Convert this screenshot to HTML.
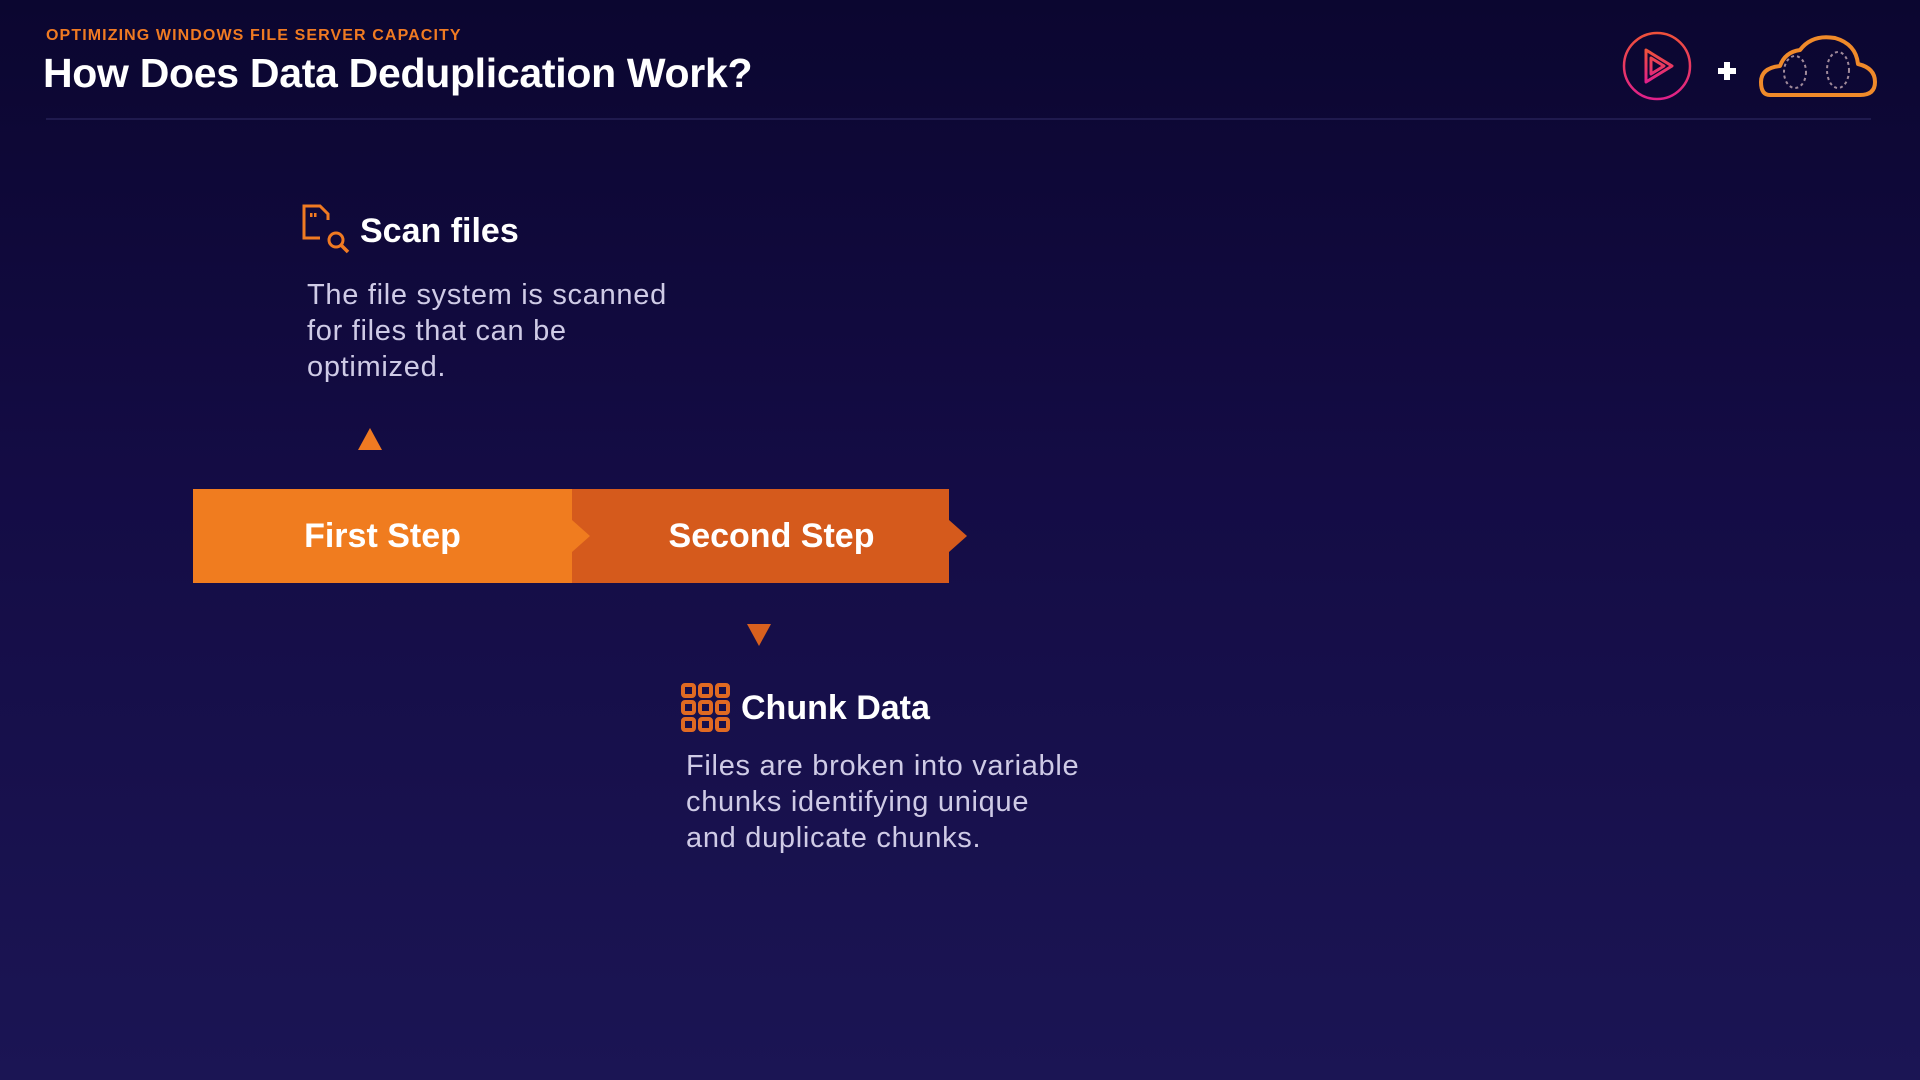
<!DOCTYPE html>
<html><head><meta charset="utf-8"><style>
*{margin:0;padding:0;box-sizing:border-box}
body{width:1920px;height:1080px;overflow:hidden;position:relative;font-family:"Liberation Sans",sans-serif;background:linear-gradient(180deg,#0b0630 0%,#140c45 45%,#1b1554 100%)}
.a{position:absolute}
.sub{left:46px;top:27px;font-size:16px;font-weight:bold;color:#f07a22;letter-spacing:1.1px}
.title{left:43px;top:50px;font-size:41px;font-weight:bold;color:#fff;letter-spacing:-0.3px}
.line{left:46px;top:118px;width:1825px;height:2px;background:#1f1a4e}
.h{font-size:34px;font-weight:bold;color:#fff}
.p{font-size:29px;line-height:36px;color:#cfcbe6;letter-spacing:0.7px}
.bar{top:489px;height:94px;display:flex;align-items:center;justify-content:center;font-size:34px;font-weight:bold;color:#fff}
</style></head><body>
<div class="a sub">OPTIMIZING WINDOWS FILE SERVER CAPACITY</div>
<div class="a title">How Does Data Deduplication Work?</div>
<div class="a line"></div>

<svg class="a" style="left:1620px;top:30px" width="260" height="72" viewBox="0 0 260 72">
<defs><linearGradient id="g" x1="0" y1="0" x2="0" y2="1"><stop offset="0" stop-color="#f0513a"/><stop offset="1" stop-color="#e0208a"/></linearGradient></defs>
<circle cx="37" cy="36" r="33" fill="none" stroke="url(#g)" stroke-width="2.5"/>
<path d="M26 20 L52 36 L26 52 Z M31 28 L44 36 L31 44 Z" fill="none" stroke="url(#g)" stroke-width="3" stroke-linejoin="round"/>
<path d="M98 41 H116 M107 32 V50" stroke="#fff" stroke-width="6"/>
<path d="M150 65 Q141 65 141 52 Q141 38 160 36 Q165 22 180 20 Q192 4 215 8 Q236 14 238 34 Q255 38 255 52 Q255 65 240 65 Z" fill="none" stroke="#f08a2a" stroke-width="4" stroke-linejoin="round"/>
<ellipse cx="175" cy="42" rx="11" ry="16" fill="none" stroke="#a08a9a" stroke-width="2" stroke-dasharray="3 3"/>
<ellipse cx="218" cy="40" rx="11" ry="18" fill="none" stroke="#a08a9a" stroke-width="2" stroke-dasharray="3 3"/>
</svg>

<svg class="a" style="left:302px;top:204px" width="50" height="50" viewBox="0 0 50 50">
<path d="M18 34 H2 V2 H18 L26 10 V16" fill="none" stroke="#f07a22" stroke-width="3"/>
<rect x="8" y="9" width="2.5" height="4" fill="#f07a22"/><rect x="12" y="9" width="2.5" height="4" fill="#f07a22"/>
<circle cx="34" cy="36" r="7" fill="none" stroke="#f07a22" stroke-width="3"/>
<path d="M39 41 L46 48" stroke="#f07a22" stroke-width="3.5"/>
</svg>
<div class="a h" style="left:360px;top:212px">Scan files</div>
<div class="a p" style="left:307px;top:277px">The file system is scanned<br>for files that can be<br>optimized.</div>
<svg class="a" style="left:358px;top:428px" width="24" height="22"><path d="M12 0 L24 22 H0 Z" fill="#f07a22"/></svg>

<div class="a bar" style="left:193px;width:379px;background:#f07c1f">First Step</div>
<div class="a bar" style="left:572px;width:377px;background:#d55a1c;padding-left:22px">Second Step</div>
<svg class="a" style="left:572px;top:520px" width="18" height="32"><path d="M0 0 L18 16 L0 32 Z" fill="#f07c1f"/></svg>
<svg class="a" style="left:949px;top:520px" width="18" height="32"><path d="M0 0 L18 16 L0 32 Z" fill="#d55a1c"/></svg>

<svg class="a" style="left:747px;top:624px" width="24" height="22"><path d="M0 0 H24 L12 22 Z" fill="#d8601e"/></svg>
<svg class="a" style="left:681px;top:683px" width="50" height="50" viewBox="0 0 50 50">
<g fill="none" stroke="#e06a22" stroke-width="4">
<rect x="2" y="2" width="11" height="11" rx="2"/><rect x="19" y="2" width="11" height="11" rx="2"/><rect x="36" y="2" width="11" height="11" rx="2"/>
<rect x="2" y="19" width="11" height="11" rx="2"/><rect x="19" y="19" width="11" height="11" rx="2"/><rect x="36" y="19" width="11" height="11" rx="2"/>
<rect x="2" y="36" width="11" height="11" rx="2"/><rect x="19" y="36" width="11" height="11" rx="2"/><rect x="36" y="36" width="11" height="11" rx="2"/>
</g></svg>
<div class="a h" style="left:741px;top:689px">Chunk Data</div>
<div class="a p" style="left:686px;top:748px">Files are broken into variable<br>chunks identifying unique<br>and duplicate chunks.</div>
</body></html>
